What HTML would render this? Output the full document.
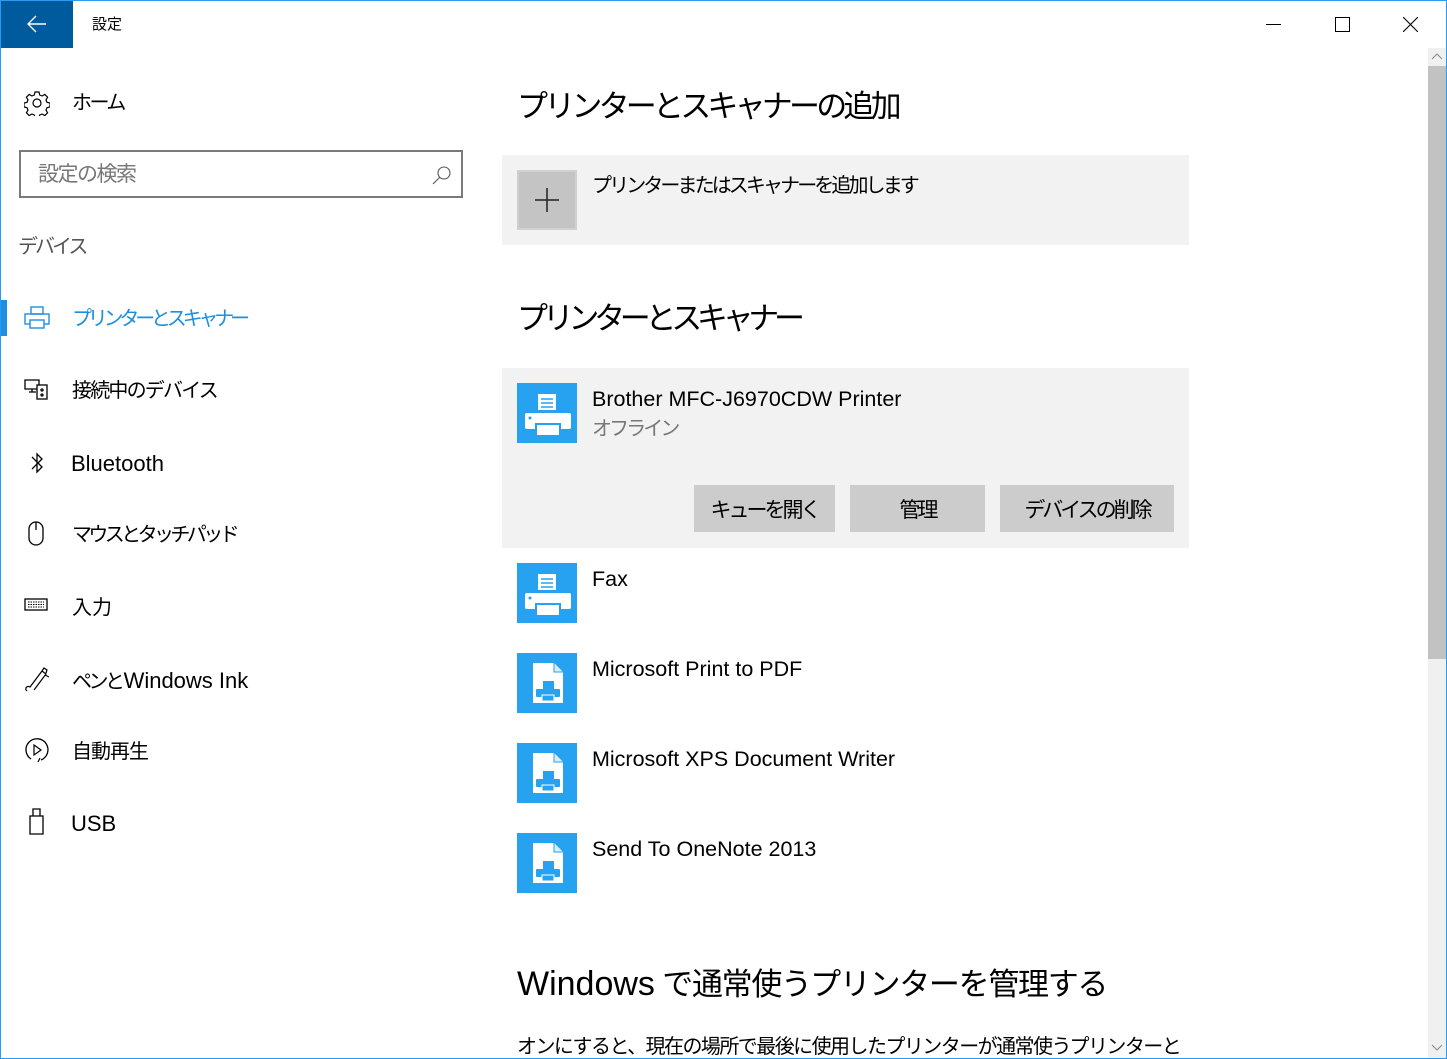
<!DOCTYPE html>
<html><head><meta charset="utf-8">
<style>
*{margin:0;padding:0;box-sizing:border-box}
body{width:1447px;height:1059px;overflow:hidden;background:#fff;position:relative;font-family:"Liberation Sans","Noto Sans CJK JP",sans-serif;color:#000}
.a{position:absolute;white-space:nowrap;line-height:1}
.nav{font-size:20px;letter-spacing:-3.5px}
.lat{letter-spacing:0;font-size:22px}
.h{font-size:31px;letter-spacing:-3.8px}
.t{font-size:20px;letter-spacing:-2.9px}
.n{font-size:21.5px;letter-spacing:0}
.btn{position:absolute;top:485px;height:47px;background:#ccc;font-size:21px;letter-spacing:-3px;display:flex;align-items:center;justify-content:center}
svg{position:absolute}
</style></head><body>
<div style="position:absolute;left:0;top:0;width:1447px;height:1059px;border:1px solid #2b9af3;pointer-events:none;z-index:9"></div>
<div style="position:absolute;left:1px;top:1px;width:72px;height:47px;background:#005a9e"></div>
<svg style="left:26px;top:14px" width="22" height="20" viewBox="0 0 22 20"><path d="M20 10H3M10 2L2 10l8 8" stroke="#fff" stroke-width="1.4" fill="none"/></svg>
<div class="a" style="left:92px;top:17px;font-size:15px">設定</div>
<div style="position:absolute;left:1266px;top:24px;width:15px;height:1px;background:#000"></div>
<div style="position:absolute;left:1335px;top:17px;width:15px;height:15px;border:1px solid #000"></div>
<svg style="left:1403px;top:17px" width="15" height="15"><path d="M0 0L15 15M15 0L0 15" stroke="#000" stroke-width="1.1"/></svg>
<div style="position:absolute;left:1428px;top:48px;width:18px;height:1010px;background:#f0f0f0"></div>
<div style="position:absolute;left:1428px;top:66px;width:18px;height:593px;background:#c2c2c2"></div>
<svg style="left:1430px;top:52px" width="14" height="10"><path d="M2 7l5-5 5 5" stroke="#888" fill="none"/></svg>
<svg style="left:1430px;top:1042px" width="14" height="10"><path d="M2 3l5 5 5-5" stroke="#888" fill="none"/></svg>

<svg style="left:24px;top:90px" width="26" height="26" viewBox="0 0 26 26"><g fill="none" stroke="#000" stroke-width="1.2"><circle cx="13" cy="13" r="4"/><path d="M11 2h4l.7 3 2.4 1 2.7-1.6 2.8 2.8-1.6 2.7 1 2.4 3 .7v4l-3 .7-1 2.4 1.6 2.7-2.8 2.8-2.7-1.6-2.4 1-.7 3h-4l-.7-3-2.4-1-2.7 1.6-2.8-2.8 1.6-2.7-1-2.4-3-.7v-4l3-.7 1-2.4-1.6-2.7 2.8-2.8 2.7 1.6 2.4-1z"/></g></svg>
<div class="a nav" style="left:72px;top:93px;letter-spacing:-2.5px">ホーム</div>
<div style="position:absolute;left:19px;top:150px;width:444px;height:48px;border:2px solid #7a7a7a"></div>
<div class="a" style="left:38px;top:164px;font-size:21px;color:#777;letter-spacing:-1.5px">設定の検索</div>
<svg style="left:431px;top:164px" width="22" height="22"><circle cx="13" cy="9" r="6" fill="none" stroke="#555" stroke-width="1.1"/><path d="M9 13l-7 7" stroke="#555" stroke-width="1.1"/></svg>
<div class="a" style="left:18px;top:237px;font-size:20px;color:#555;letter-spacing:-3px">デバイス</div>

<div style="position:absolute;left:1px;top:300px;width:6px;height:36px;background:#1e8fe0"></div>
<svg style="left:24px;top:305px" width="26" height="26" viewBox="0 0 26 26"><g fill="none" stroke="#1e8fe0" stroke-width="1.4"><rect x="7" y="2" width="12" height="7"/><rect x="1" y="9" width="24" height="10"/><rect x="6" y="15" width="14" height="8" fill="#fff"/></g></svg>
<div class="a nav" style="left:72px;top:309px;color:#1e8fe0;letter-spacing:-4.2px">プリンターとスキャナー</div>

<svg style="left:24px;top:378px" width="26" height="24"><g fill="none" stroke="#000" stroke-width="1.3"><path d="M1 2h14v9H1zM5 14h7M8 11v3"/><rect x="13" y="7" width="10" height="14" fill="#fff"/><circle cx="18" cy="12" r="1"/><circle cx="18" cy="17" r="1"/></g></svg>
<div class="a nav" style="left:72px;top:381px;letter-spacing:-1.8px">接続中のデバイス</div>
<svg style="left:28px;top:451px" width="18" height="24"><path d="M4 6l10 10-5 5V3l5 5L4 18" fill="none" stroke="#000" stroke-width="1.3"/></svg>
<div class="a lat" style="left:71px;top:453px">Bluetooth</div>
<svg style="left:26px;top:520px" width="20" height="28"><path d="M3 9a7 7 0 0 1 14 0v9a7 7 0 0 1-14 0zM10 2v8" fill="none" stroke="#000" stroke-width="1.3"/></svg>
<div class="a nav" style="left:72px;top:525px;letter-spacing:-3.6px">マウスとタッチパッド</div>
<svg style="left:24px;top:597px" width="26" height="16"><rect x="1" y="2" width="22" height="11" fill="none" stroke="#000" stroke-width="1.3"/><path d="M4 5h16M4 7.5h16M4 10h16" stroke="#000" stroke-width="1" stroke-dasharray="1.5 1"/></svg>
<div class="a nav" style="left:72px;top:598px;letter-spacing:0">入力</div>
<svg style="left:24px;top:665px" width="26" height="28"><path d="M3 26c-3-2 0-6 3-4l12-16 4 3-12 16M18 6l2-3 3 2-1 3M21 10l4 2" fill="none" stroke="#000" stroke-width="1.2"/></svg>
<div class="a nav" style="left:72px;top:670px">ペンと <span style="font-size:22px;letter-spacing:0">Windows Ink</span></div>
<svg style="left:24px;top:737px" width="26" height="28"><path d="M7 22A11 11 0 1 1 17 23" fill="none" stroke="#000" stroke-width="1.3"/><path d="M10 8l7 5-7 5z" fill="none" stroke="#000" stroke-width="1.2"/><path d="M16 21l-2 4" stroke="#000" stroke-width="1.2"/></svg>
<div class="a nav" style="left:72px;top:742px;letter-spacing:-1px">自動再生</div>
<svg style="left:28px;top:808px" width="18" height="28"><path d="M5 1h7v7H5zM2 8h13v18H2z" fill="none" stroke="#000" stroke-width="1.3"/></svg>
<div class="a lat" style="left:71px;top:813px">USB</div>

<div class="a h" style="left:517px;top:91px">プリンターとスキャナーの追加</div>
<div style="position:absolute;left:502px;top:155px;width:687px;height:90px;background:#f2f2f2"></div>
<div style="position:absolute;left:517px;top:170px;width:60px;height:60px;background:#c4c4c4;border:2px solid #d0d0d0"></div>
<svg style="left:535px;top:188px" width="24" height="24"><path d="M12 0v24M0 12h24" stroke="#222" stroke-width="1.5"/></svg>
<div class="a t" style="left:592px;top:176px">プリンターまたはスキャナーを追加します</div>

<div class="a h" style="left:517px;top:303px;letter-spacing:-5.3px">プリンターとスキャナー</div>
<div style="position:absolute;left:502px;top:368px;width:687px;height:180px;background:#f2f2f2"></div>

<svg style="left:517px;top:383px" width="60" height="60" viewBox="0 0 60 60"><rect width="60" height="60" fill="#27a2f0"/><rect x="21" y="11" width="18" height="16" fill="#fff"/><path d="M24 16h12M24 20h12M24 24h12" stroke="#27a2f0" stroke-width="1.5"/><rect x="8" y="30" width="46" height="16" rx="2" fill="#fff"/><circle cx="13" cy="35" r="1.5" fill="#27a2f0"/><rect x="19" y="41" width="24" height="12" fill="#fff" stroke="#27a2f0" stroke-width="2"/></svg>
<div class="a n" style="left:592px;top:389px">Brother MFC-J6970CDW Printer</div>
<div class="a t" style="left:592px;top:419px;color:#777">オフライン</div>
<div class="btn" style="left:694px;width:141px">キューを開く</div>
<div class="btn" style="left:850px;width:135px">管理</div>
<div class="btn" style="left:1000px;width:174px">デバイスの削除</div>

<svg style="left:517px;top:563px" width="60" height="60" viewBox="0 0 60 60"><rect width="60" height="60" fill="#27a2f0"/><rect x="21" y="11" width="18" height="16" fill="#fff"/><path d="M24 16h12M24 20h12M24 24h12" stroke="#27a2f0" stroke-width="1.5"/><rect x="8" y="30" width="46" height="16" rx="2" fill="#fff"/><circle cx="13" cy="35" r="1.5" fill="#27a2f0"/><rect x="19" y="41" width="24" height="12" fill="#fff" stroke="#27a2f0" stroke-width="2"/></svg>
<div class="a n" style="left:592px;top:569px">Fax</div>

<svg style="left:517px;top:653px" width="60" height="60" viewBox="0 0 60 60"><rect width="60" height="60" fill="#27a2f0"/><path d="M16 10h21l9 9v31H16z" fill="#fff"/><path d="M37 10v9h9" fill="#d8ecfb" stroke="#27a2f0" stroke-width="1"/><rect x="26" y="28" width="11" height="8" fill="#27a2f0"/><rect x="19" y="36" width="24" height="8" rx="1" fill="#27a2f0"/><rect x="25" y="42" width="12" height="6" fill="#27a2f0" stroke="#fff" stroke-width="1"/></svg>
<div class="a n" style="left:592px;top:659px">Microsoft Print to PDF</div>

<svg style="left:517px;top:743px" width="60" height="60" viewBox="0 0 60 60"><rect width="60" height="60" fill="#27a2f0"/><path d="M16 10h21l9 9v31H16z" fill="#fff"/><path d="M37 10v9h9" fill="#d8ecfb" stroke="#27a2f0" stroke-width="1"/><rect x="26" y="28" width="11" height="8" fill="#27a2f0"/><rect x="19" y="36" width="24" height="8" rx="1" fill="#27a2f0"/><rect x="25" y="42" width="12" height="6" fill="#27a2f0" stroke="#fff" stroke-width="1"/></svg>
<div class="a n" style="left:592px;top:749px">Microsoft XPS Document Writer</div>

<svg style="left:517px;top:833px" width="60" height="60" viewBox="0 0 60 60"><rect width="60" height="60" fill="#27a2f0"/><path d="M16 10h21l9 9v31H16z" fill="#fff"/><path d="M37 10v9h9" fill="#d8ecfb" stroke="#27a2f0" stroke-width="1"/><rect x="26" y="28" width="11" height="8" fill="#27a2f0"/><rect x="19" y="36" width="24" height="8" rx="1" fill="#27a2f0"/><rect x="25" y="42" width="12" height="6" fill="#27a2f0" stroke="#fff" stroke-width="1"/></svg>
<div class="a n" style="left:592px;top:839px">Send To OneNote 2013</div>

<div class="a h" style="left:517px;top:967px;letter-spacing:-1.3px"><span style="letter-spacing:0;font-size:34px">Windows</span> で通常使うプリンターを管理する</div>
<div class="a t" style="left:517px;top:1037px;letter-spacing:-1.55px">オンにすると、現在の場所で最後に使用したプリンターが通常使うプリンターと</div>
</body></html>
